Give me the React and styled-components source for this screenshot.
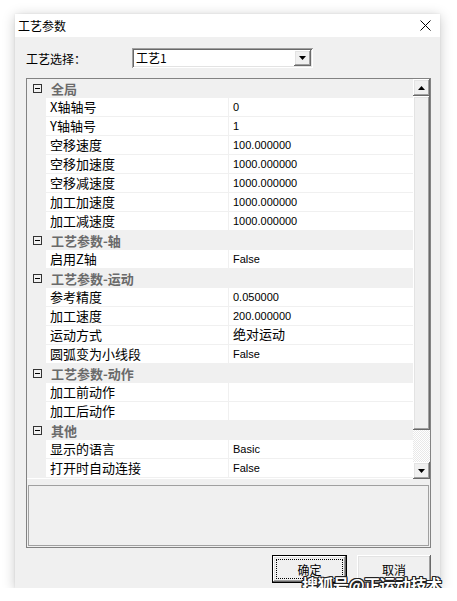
import React from 'react'
import styled, { createGlobalStyle } from 'styled-components'

const GlobalStyle = createGlobalStyle`
  body {
    margin: 0;
    background: #fff;
    font-family: "Noto Sans CJK SC", "Liberation Sans", sans-serif;
    color: #000;
  }
`;

const groups = [
    {
        title: '全局',
        items: [
            ['X轴轴号', '0'],
            ['Y轴轴号', '1'],
            ['空移速度', '100.000000'],
            ['空移加速度', '1000.000000'],
            ['空移减速度', '1000.000000'],
            ['加工加速度', '1000.000000'],
            ['加工减速度', '1000.000000'],
        ]
    },
    { title: '工艺参数-轴', items: [['启用Z轴', 'False']] },
    {
        title: '工艺参数-运动',
        items: [
            ['参考精度', '0.050000'],
            ['加工速度', '200.000000'],
            ['运动方式', '绝对运动'],
            ['圆弧变为小线段', 'False'],
        ]
    },
    { title: '工艺参数-动作', items: [['加工前动作', ''], ['加工后动作', '']] },
    { title: '其他', items: [['显示的语言', 'Basic'], ['打开时自动连接', 'False']] },
];

const raised = `
  box-shadow: inset -1px -1px #696969, inset 1px 1px #fff, inset -2px -2px #a0a0a0, inset 2px 2px #e3e3e3;
`;

const Arrow = ({ up }) => (
    <svg width="7" height="4" viewBox="0 0 7 4">
        <polygon points={up ? '3.5,0 7,4 0,4' : '0,0 7,0 3.5,4'} fill="#000" />
    </svg>
);

const App = () => {
    return (
        <Page>
            <GlobalStyle />
            <Dialog>
                <TitleBar>
                    <Title>工艺参数</Title>
                    <svg width="11" height="11" viewBox="0 0 11 11">
                        <path d="M0.5 0.5 L10.5 10.5 M10.5 0.5 L0.5 10.5" stroke="#000" strokeWidth="1" />
                    </svg>
                </TitleBar>
                <Body>
                    <SelectRow>
                        <Label>工艺选择：</Label>
                        <Combo>
                            <ComboText>工艺1</ComboText>
                            <ComboBtn><Arrow /></ComboBtn>
                        </Combo>
                    </SelectRow>
                    <Frame>
                        <Grid>
                            <Rows>
                                {groups.map(g => (
                                    <React.Fragment key={g.title}>
                                        <CatRow>
                                            <Margin>
                                                <svg width="9" height="9" viewBox="0 0 9 9">
                                                    <rect x="0.5" y="0.5" width="8" height="8" fill="none" stroke="#333" />
                                                    <path d="M2 4.5 H7" stroke="#000" />
                                                </svg>
                                            </Margin>
                                            <CatLabel>{g.title}</CatLabel>
                                        </CatRow>
                                        {g.items.map(([name, val]) => (
                                            <Row key={name}>
                                                <Margin />
                                                <Name>{name}</Name>
                                                <Value $cjk={/[\u4e00-\u9fff]/.test(val)}>{val}</Value>
                                            </Row>
                                        ))}
                                    </React.Fragment>
                                ))}
                            </Rows>
                            <ScrollBar>
                                <ScrollBtn><Arrow up /></ScrollBtn>
                                <Thumb />
                                <Track />
                                <ScrollBtn><Arrow /></ScrollBtn>
                            </ScrollBar>
                        </Grid>
                        <DescBox />
                    </Frame>
                    <ButtonRow>
                        <Button $default>确定</Button>
                        <Button>取消</Button>
                    </ButtonRow>
                </Body>
            </Dialog>
            <Watermark>搜狐号@正运动技术</Watermark>
        </Page>
    );
}

export default App;

const Page = styled.div`
  position: relative;
  padding: 14px 0 0 15px;
`;

const Dialog = styled.div`
  width: 425px;
  height: 574px;
  background: #f0f0f0;
  box-shadow: 0 2px 12px rgba(0, 0, 0, 0.22), 0 0 2px rgba(0, 0, 0, 0.08);
  display: flex;
  flex-direction: column;
`;

const TitleBar = styled.div`
  height: 23px;
  background: #fff;
  display: flex;
  align-items: center;
  justify-content: space-between;
  padding: 0 9px 0 3px;
`;

const Title = styled.span`
  font-size: 12px;
  line-height: 16px;
`;

const Body = styled.div`
  padding: 11px 9px 0 11px;
  display: flex;
  flex-direction: column;
`;

const SelectRow = styled.div`
  display: flex;
  align-items: center;
  height: 20px;
`;

const Label = styled.span`
  width: 106px;
  font-size: 12px;
`;

const Combo = styled.div`
  width: 181px;
  height: 20px;
  box-sizing: border-box;
  background: #fff;
  display: flex;
  align-items: center;
  justify-content: space-between;
  box-shadow: inset 1px 1px #a0a0a0, inset -1px -1px #fff, inset 2px 2px #696969, inset -2px -2px #e3e3e3;
  padding: 2px;
`;

const ComboText = styled.span`
  font-size: 12px;
  padding-left: 2px;
  line-height: 16px;
`;

const ComboBtn = styled.div`
  width: 17px;
  height: 16px;
  background: #f0f0f0;
  display: flex;
  align-items: center;
  justify-content: center;
  ${raised}
`;

const Frame = styled.div`
  margin-top: 10px;
  border: 1px solid #828282;
  display: flex;
  flex-direction: column;
`;

const Grid = styled.div`
  height: 400px;
  display: flex;
  background: #fff;
`;

const Rows = styled.div`
  flex: 1;
  display: flex;
  flex-direction: column;
`;

const CatRow = styled.div`
  height: 19px;
  display: flex;
  background: #f0f0f0;
`;

const Row = styled.div`
  height: 19px;
  display: flex;
`;

const Margin = styled.div`
  width: 19px;
  flex: none;
  background: #f0f0f0;
  display: flex;
  align-items: center;
  justify-content: center;
  padding-left: 1px;
  box-sizing: border-box;
`;

const CatLabel = styled.span`
  padding-left: 5px;
  font-size: 13px;
  font-weight: bold;
  color: #6a6a6a;
  line-height: 19px;
`;

const Name = styled.div`
  width: 183px;
  flex: none;
  box-sizing: border-box;
  border-right: 1px solid #f0f0f0;
  border-bottom: 1px solid #f0f0f0;
  padding-left: 4px;
  font-size: 13px;
  line-height: 18px;
  white-space: nowrap;
`;

const Value = styled.div`
  flex: 1;
  border-bottom: 1px solid #f0f0f0;
  padding-left: 4px;
  font-family: "Liberation Sans", "Noto Sans CJK SC", sans-serif;
  font-size: ${p => (p.$cjk ? '13px' : '11px')};
  line-height: 18px;
  white-space: nowrap;
`;

const ScrollBar = styled.div`
  width: 17px;
  display: flex;
  flex-direction: column;
`;

const ScrollBtn = styled.div`
  height: 17px;
  flex: none;
  background: #f0f0f0;
  display: flex;
  align-items: center;
  justify-content: center;
  ${raised}
`;

const Thumb = styled.div`
  height: 334px;
  flex: none;
  background: #f0f0f0;
  ${raised}
`;

const Track = styled.div`
  flex: 1;
  background-color: #fff;
  background-image: conic-gradient(#e8e8e8 25%, #fff 0 50%, #e8e8e8 0 75%, #fff 0);
  background-size: 2px 2px;
`;

const DescBox = styled.div`
  margin: 6px 1px 1px 1px;
  height: 61px;
  box-sizing: border-box;
  border: 1px solid #a0a0a0;
`;

const ButtonRow = styled.div`
  margin-top: 7px;
  display: flex;
  justify-content: flex-end;
  gap: 10px;
`;

const Button = styled.div`
  position: relative;
  width: ${p => (p.$default ? '75px' : '74px')};
  height: 28px;
  box-sizing: border-box;
  background: #f0f0f0;
  display: flex;
  align-items: center;
  justify-content: center;
  font-size: 12px;
  ${p => p.$default
        ? `border: 1px solid #000;
       box-shadow: inset -1px -1px #696969, inset 1px 1px #fff, inset -2px -2px #a0a0a0, inset 2px 2px #e3e3e3;
       &::after {
         content: '';
         position: absolute;
         inset: 3px;
         border: 1px dotted #000;
       }`
        : raised}
`;

const Watermark = styled.div`
  position: absolute;
  left: 302px;
  top: 572px;
  font-size: 16px;
  font-weight: bold;
  color: #fff;
  white-space: nowrap;
  letter-spacing: -0.5px;
  text-shadow: 1px 0 #222, -1px 0 #222, 0 1px #222, 0 -1px #222, 1px 1px #222, -1px -1px #222, 1px -1px #222, -1px 1px #222;
`;
